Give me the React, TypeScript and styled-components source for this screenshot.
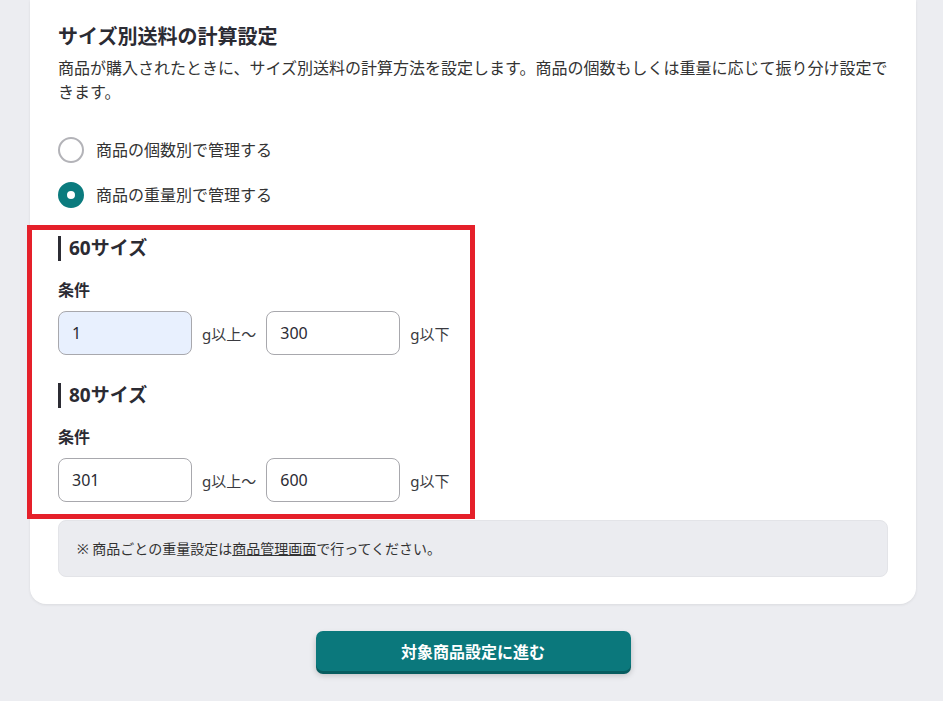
import React from "react";
import styled, { createGlobalStyle } from "styled-components";

const GlobalStyle = createGlobalStyle`
  html, body {
    margin: 0;
    padding: 0;
    background: #ecedf1;
  }
  body {
    font-family: "Noto Sans", "Noto Sans CJK JP", sans-serif;
    color: #2f2f36;
  }
`;

const Page = styled.div`
  margin: 0 27px 0 30px;
  padding-bottom: 40px;
`;

const Card = styled.section`
  background: #fff;
  border-radius: 0 0 16px 16px;
  box-shadow: 0 1px 3px rgba(0, 0, 0, 0.08);
  padding: 22px 28px 27px;
`;

const Title = styled.h2`
  margin: 0;
  font-size: 20px;
  line-height: 30px;
  font-weight: 700;
  color: #2b2b33;
`;

const Description = styled.p`
  margin: 4px 0 0;
  font-size: 16px;
  line-height: 24px;
  color: #333;
`;

const RadioList = styled.div`
  display: flex;
  flex-direction: column;
  gap: 19px;
  margin-top: 33px;
`;

const RadioRow = styled.label`
  display: flex;
  align-items: center;
  gap: 12px;
  font-size: 16px;
  line-height: 26px;
  color: #333;
  cursor: pointer;
`;

const RadioMark = styled.span<{ $checked: boolean }>`
  box-sizing: border-box;
  width: 26px;
  height: 26px;
  border-radius: 50%;
  flex-shrink: 0;
  border: ${(p) => (p.$checked ? "9px solid #0b7b7e" : "2px solid #b3b3b8")};
  background: #fff;
`;

const Highlight = styled.div`
  margin: 17px 0 0 -31px;
  width: 448px;
  box-sizing: border-box;
  border: 5px solid #e5202a;
  padding: 6px 0 12px 26px;
`;

const SizeBlock = styled.div<{ $first?: boolean }>`
  margin-top: ${(p) => (p.$first ? "0" : "28px")};
`;

const SizeHeading = styled.h3`
  margin: 0;
  border-left: 3px solid #2c2c34;
  padding-left: 8px;
  font-size: 19px;
  line-height: 25px;
  font-weight: 700;
  color: #2b2b33;
`;

const FieldLabel = styled.div`
  margin-top: 18px;
  font-size: 16px;
  line-height: 22px;
  font-weight: 700;
  color: #2b2b33;
`;

const RangeRow = styled.div`
  display: flex;
  align-items: center;
  gap: 10px;
  margin-top: 10px;
`;

const NumberInput = styled.input<{ $filled?: boolean }>`
  box-sizing: border-box;
  width: 134px;
  height: 44px;
  border: 1px solid #a8a8ad;
  border-radius: 8px;
  padding: 0 13px;
  font-family: inherit;
  font-size: 16px;
  color: #2b2b33;
  background: ${(p) => (p.$filled ? "#e8f0fe" : "#fff")};
  outline: none;
`;

const Unit = styled.span`
  font-size: 15px;
  color: #3a3a40;
`;

const Note = styled.div`
  margin-top: 1px;
  background: #ebecf0;
  border: 1px solid #e3e4e8;
  border-radius: 8px;
  padding: 18px 18px 17px;
  font-size: 14px;
  line-height: 20px;
  color: #333;
`;

const NoteLink = styled.a`
  color: #333;
  text-decoration: underline;
`;

const Actions = styled.div`
  display: flex;
  justify-content: center;
  margin-top: 27px;
`;

const PrimaryButton = styled.button`
  width: 315px;
  height: 40px;
  border: none;
  border-radius: 7px;
  background: #0b787c;
  color: #fff;
  font-family: inherit;
  font-size: 16px;
  font-weight: 700;
  box-shadow: 0 3px 0 #065c5f, 0 4px 6px rgba(0, 0, 0, 0.22);
  cursor: pointer;
`;

type SizeRule = { name: string; min: string; max: string; filled?: boolean };

const rules: SizeRule[] = [
  { name: "60サイズ", min: "1", max: "300", filled: true },
  { name: "80サイズ", min: "301", max: "600" },
];

export default function App() {
  const [mode, setMode] = React.useState<"count" | "weight">("weight");
  return (
    <>
      <GlobalStyle />
      <Page>
        <Card>
          <Title>サイズ別送料の計算設定</Title>
          <Description>
            商品が購入されたときに、サイズ別送料の計算方法を設定します。商品の個数もしくは重量に応じて振り分け設定できます。
          </Description>
          <RadioList>
            <RadioRow onClick={() => setMode("count")}>
              <RadioMark $checked={mode === "count"} />
              商品の個数別で管理する
            </RadioRow>
            <RadioRow onClick={() => setMode("weight")}>
              <RadioMark $checked={mode === "weight"} />
              商品の重量別で管理する
            </RadioRow>
          </RadioList>
          <Highlight>
            {rules.map((r, i) => (
              <SizeBlock key={r.name} $first={i === 0}>
                <SizeHeading>{r.name}</SizeHeading>
                <FieldLabel>条件</FieldLabel>
                <RangeRow>
                  <NumberInput defaultValue={r.min} $filled={r.filled} />
                  <Unit>g以上〜</Unit>
                  <NumberInput defaultValue={r.max} />
                  <Unit>g以下</Unit>
                </RangeRow>
              </SizeBlock>
            ))}
          </Highlight>
          <Note>
            ※ 商品ごとの重量設定は<NoteLink href="#">商品管理画面</NoteLink>で行ってください。
          </Note>
        </Card>
        <Actions>
          <PrimaryButton>対象商品設定に進む</PrimaryButton>
        </Actions>
      </Page>
    </>
  );
}
